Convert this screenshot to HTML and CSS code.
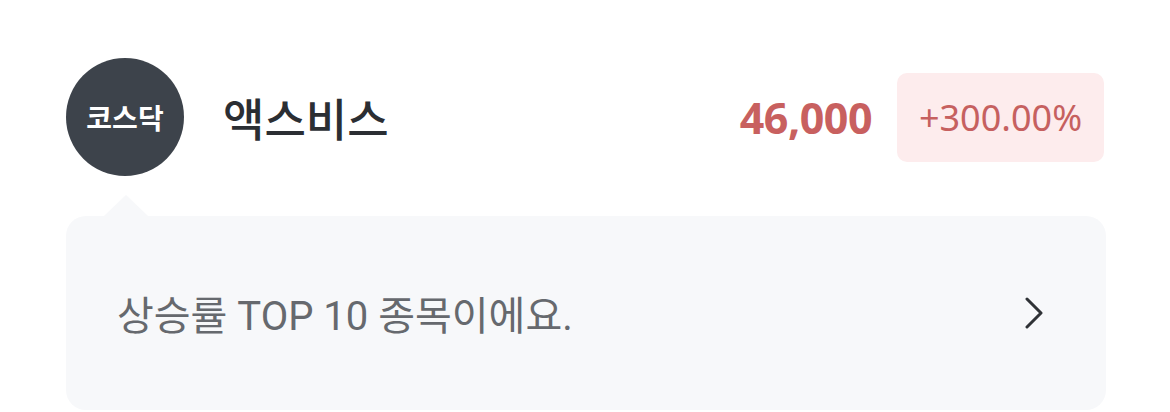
FILE: index.html
```html
<!DOCTYPE html>
<html lang="ko">
<head>
    <meta charset="UTF-8">
    <meta name="viewport" content="width=device-width, initial-scale=1.0">
    <title>액스비스</title>
    <link rel="stylesheet" href="styles.css">
</head>
<body>
    <div class="stock">
        <div class="stock-row">
            <div class="market">코스닥</div>
            <div class="name">액스비스</div>
            <div class="price">46,000</div>
            <div class="rate">+300.00%</div>
        </div>

        <div class="bubble">
            <span class="bubble-text">상승률 TOP 10 종목이에요.</span>
            <svg class="chevron" width="20" height="32" viewBox="0 0 20 32">
                <polyline points="3,2 17,16 3,30" fill="none" stroke="#2f3236" stroke-width="3" stroke-linecap="round" stroke-linejoin="round"/>
            </svg>
        </div>
    </div>
</body>
</html>
```

FILE: styles.css
```css
body{
    margin: 0;
    background: #ffffff;
    font-family: Roboto, "Noto Sans CJK KR", sans-serif;
}

.stock{
    padding: 58px 64px 0 66px;
}

.stock-row{
    display: flex;
    align-items: center;
}

.market{
    width: 118px;
    height: 118px;
    border-radius: 50%;
    background: #3d434b;
    color: #ffffff;
    font-family: "Noto Sans CJK KR", sans-serif;
    font-weight: 700;
    font-size: 28px;
    display: flex;
    align-items: center;
    justify-content: center;
    flex-shrink: 0;
}

.name{
    margin-left: 39px;
    font-family: "Noto Sans CJK KR", sans-serif;
    font-weight: 500;
    font-size: 45px;
    color: #2b2e33;
    flex: 1;
}

.price{
    font-family: "Noto Sans", sans-serif;
    font-weight: 700;
    font-size: 43px;
    letter-spacing: -0.5px;
    color: #c8605f;
    margin-right: 25px;
}

.rate{
    width: 207px;
    height: 89px;
    margin-right: 2px;
    box-sizing: border-box;
    border-radius: 10px;
    background: #fdeced;
    color: #c6605f;
    font-family: "Noto Sans", sans-serif;
    font-size: 36px;
    display: flex;
    align-items: center;
    justify-content: center;
}

.bubble{
    position: relative;
    margin-top: 40px;
    height: 194px;
    border-radius: 20px;
    background: #f7f8fa;
    display: flex;
    align-items: center;
    justify-content: space-between;
    padding: 0 62px 0 51px;
    box-sizing: border-box;
}

.bubble::before{
    content: "";
    position: absolute;
    left: 38px;
    top: -21px;
    border-left: 22px solid transparent;
    border-right: 22px solid transparent;
    border-bottom: 21px solid #f7f8fa;
}

.bubble-text{
    font-size: 40px;
    color: #66696e;
}
```
